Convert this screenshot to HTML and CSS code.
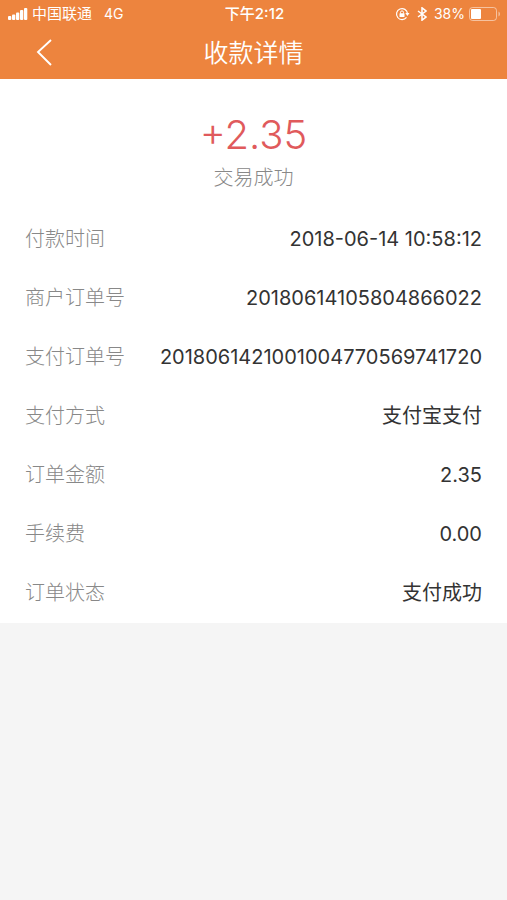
FILE: index.html
```html
<!DOCTYPE html>
<html lang="zh-CN">
<head>
    <meta charset="UTF-8">
    <meta name="viewport" content="width=device-width, initial-scale=1.0">
    <title>收款详情</title>
    <link rel="stylesheet" href="styles.css">
</head>
<body>
    <header class="header">
        <div class="status-bar">
            <div class="status-left">
                <svg class="signal" width="20" height="12" viewBox="0 0 20 12" fill="#fff" aria-hidden="true">
                    <rect x="0" y="8" width="3.3" height="4" rx="1"/>
                    <rect x="4" y="6.5" width="3.3" height="5.5" rx="1"/>
                    <rect x="8" y="4.5" width="3.3" height="7.5" rx="1"/>
                    <rect x="12" y="2" width="3.3" height="10" rx="1"/>
                    <rect x="16" y="0" width="3.3" height="12" rx="1"/>
                </svg>
                <span class="carrier">中国联通</span>
                <span>4G</span>
            </div>
            <div class="status-time">下午2:12</div>
            <div class="status-right">
                <div class="status-icons">
                    <svg width="15" height="14" viewBox="0 0 15 14" fill="none" stroke="#fff" stroke-width="1.2" aria-hidden="true">
                        <path d="M11.5 10.3A5.5 5.5 0 1 1 12.5 6.5"/>
                        <path d="M10.3 6h4.2l-2.1 3z" fill="#fff" stroke="none"/>
                        <rect x="4.5" y="6.2" width="5" height="3.8" rx=".5" fill="#fff" stroke="none"/>
                        <path d="M5.5 6.5V5.4a1.5 1.5 0 0 1 3 0v1.1" stroke-width="1"/>
                    </svg>
                    <svg width="10" height="14" viewBox="0 0 10 14" fill="none" stroke="#fff" stroke-width="1.5" aria-hidden="true">
                        <path d="M1 4l8 6-4 3.2V.8L9 4 1 10"/>
                    </svg>
                    <span>38%</span>
                </div>
                <svg width="32" height="14" viewBox="0 0 32 14" aria-hidden="true">
                    <rect x=".5" y=".5" width="27" height="13" rx="3" fill="none" stroke="#fff" stroke-opacity=".5"/>
                    <rect x="2" y="2" width="10" height="10" rx="1" fill="#fff"/>
                    <path d="M29.5 4.5c2 1 2 4 0 5z" fill="#fff" fill-opacity=".5"/>
                </svg>
            </div>
        </div>
        <div class="nav-bar">
            <button class="back" type="button" aria-label="返回">
                <svg width="16" height="28" viewBox="0 0 16 28" fill="none" stroke="#fff" stroke-width="1.9" aria-hidden="true">
                    <path d="M15 1L2 13l13 13"/>
                </svg>
            </button>
            <h1 class="title">收款详情</h1>
        </div>
    </header>

    <main class="detail">
        <div class="summary">
            <p class="amount">+2.35</p>
            <p class="result">交易成功</p>
        </div>
        <dl class="list">
            <div class="row">
                <dt>付款时间</dt>
                <dd>2018-06-14 10:58:12</dd>
            </div>
            <div class="row">
                <dt>商户订单号</dt>
                <dd>20180614105804866022</dd>
            </div>
            <div class="row">
                <dt>支付订单号</dt>
                <dd>2018061421001004770569741720</dd>
            </div>
            <div class="row">
                <dt>支付方式</dt>
                <dd>支付宝支付</dd>
            </div>
            <div class="row">
                <dt>订单金额</dt>
                <dd>2.35</dd>
            </div>
            <div class="row">
                <dt>手续费</dt>
                <dd>0.00</dd>
            </div>
            <div class="row">
                <dt>订单状态</dt>
                <dd>支付成功</dd>
            </div>
        </dl>
    </main>
</body>
</html>
```
FILE: styles.css
```css
* {
    box-sizing: border-box;
}
body {
    margin: 0;
    background-color: #f5f5f5;
    color: #333;
    font-family: Inter, "Noto Sans CJK SC", sans-serif;
    font-size: 20px;
}
.header {
    background-color: #ed843e;
    color: #fff;
}
.status-bar {
    display: grid;
    grid-template-columns: 1fr auto 1fr;
    align-items: center;
    height: 27px;
    padding: 0 6px 0 8px;
    font-size: 14px;
    line-height: 27px;
}
.status-left,
.status-right,
.status-icons {
    display: flex;
    align-items: center;
    gap: 4px;
}
.status-right {
    justify-content: flex-end;
}
.status-icons {
    gap: 7px;
}
.carrier {
    margin-right: 8px;
    font-size: 15px;
}
.status-time {
    font-size: 15px;
    font-weight: 500;
}
.nav-bar {
    display: grid;
    grid-template-columns: 1fr auto 1fr;
    align-items: center;
    height: 52px;
    padding: 0 36px;
}
.back {
    display: flex;
    justify-self: start;
    padding: 0;
    border: none;
    background: none;
    cursor: pointer;
}
.title {
    margin: 0;
    font-size: 25px;
    font-weight: 350;
    line-height: 52px;
}
.detail {
    padding: 32px 25px 0;
    background-color: #fff;
}
.summary {
    text-align: center;
}
.summary p {
    margin: 0;
}
.amount {
    color: #e05a5c;
    font-size: 40px;
    font-weight: 350;
    line-height: 48px;
}
.result {
    color: #888;
    font-weight: 300;
    line-height: 38px;
}
.list {
    margin: 0;
    padding: 13px 0 0;
}
.row {
    display: flex;
    justify-content: space-between;
    line-height: 59px;
}
.row dt {
    color: #888;
    font-weight: 300;
}
.row dd {
    margin: 0;
}
```
